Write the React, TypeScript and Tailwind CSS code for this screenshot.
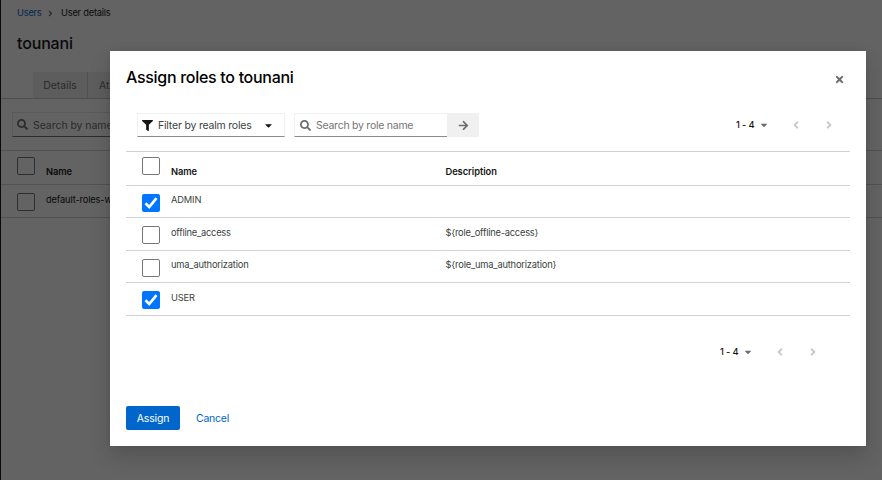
import React from 'react';
import { FaAngleLeft, FaAngleRight, FaArrowRight, FaCaretDown, FaFilter, FaSearch, FaTimes } from 'react-icons/fa';

function Box({ checked, className = '' }: { checked?: boolean; className?: string }) {
  return (
    <span
      role="checkbox"
      aria-checked={!!checked}
      className={`block size-[18px] shrink-0 rounded-[2px] ${checked ? 'bg-[#0075ff]' : 'border border-[#767676] bg-white'} ${className}`}
    >
      {checked && (
        <svg viewBox="0 0 18 18" className="size-[18px]" fill="none" stroke="white" strokeWidth="2.7">
          <path d="M3.5 9.3 7.2 13 14.5 4.2" />
        </svg>
      )}
    </span>
  );
}

function Pager({ className }: { className: string }) {
  return (
    <div className={`flex items-center ${className}`}>
      <span className="w-[23px] whitespace-nowrap text-[9.3px] font-medium text-[#151515] tracking-[-0.15px]">1 - 4</span>
      <FaCaretDown className="size-[10px] text-[#6a6e73]" />
      <FaAngleLeft className="ml-[21px] size-[12px] text-[#c8c8c8]" />
      <FaAngleRight className="ml-[21px] size-[12px] text-[#c8c8c8]" />
    </div>
  );
}

const roles = [
  { name: 'ADMIN', description: '', checked: true, row: 'h-[32px]', track: 'mt-[-2px] tracking-[-0.15px]' },
  { name: 'offline_access', description: '${role_offline-access}', checked: false, row: 'h-[33px]', track: 'mt-[-1px] tracking-[-0.22px]' },
  { name: 'uma_authorization', description: '${role_uma_authorization}', checked: false, row: 'h-[32px]', track: 'mt-[-2px] tracking-[-0.18px]' },
  { name: 'USER', description: '', checked: true, row: 'h-[33px]', track: 'mt-[-1px] tracking-[-0.15px]' },
];

function UserPage() {
  return (
    <div className="h-[480px] border-l border-[#151515] bg-white text-[#151515]">
      <div className="flex h-[26px] items-center pl-4 text-[9.3px] tracking-[-0.22px]">
        <span className="w-[29px] text-[#0066cc]">Users</span>
        <FaAngleRight className="mr-[6px] size-[9px] text-[#6a6e73]" />
        <span>User details</span>
      </div>
      <h1 className="h-[46px] pl-4 pt-[6px] text-[16px] font-[450] leading-[22px] tracking-[-0.15px]">tounani</h1>
      <div className="flex h-[27px] border-b border-[#c5c5c5] pl-8 text-[10.5px] text-[#6a6e73]">
        <div className="flex w-[55px] items-center justify-center border-r border-[#d2d2d2] bg-[#f0f0f0] pt-[2px]">Details</div>
        <div className="flex w-[22px] items-center bg-[#f0f0f0] pl-[11px] pt-[2px]">At</div>
      </div>
      <div className="h-[51px] pl-[11px] pt-[13px]">
        <div className="flex h-[25px] w-[160px] items-center border border-b-[#6a6e73] border-[#e8e8e8] pl-1 text-[10.5px] text-[#6a6e73]">
          <FaSearch className="mr-[5px] size-[11px]" />
          <span className="pt-[2px] tracking-[-0.05px]">Search by name</span>
        </div>
      </div>
      <div className="flex h-[35px] border-y border-[#d2d2d2] pl-4 pt-[6px]">
        <Box />
        <b className="ml-[11px] mt-[7px] text-[9.3px] font-semibold leading-[16px] tracking-[-0.1px]">Name</b>
      </div>
      <div className="flex h-[33px] border-b border-[#d2d2d2] pl-4 pt-[8px]">
        <Box />
        <span className="ml-[11px] mt-[-1px] whitespace-nowrap text-[9.3px] leading-[16px] tracking-[-0.14px]">default-roles-w</span>
      </div>
    </div>
  );
}

export default function App() {
  return (
    <div className="relative h-[480px] w-[882px] overflow-hidden font-['Inter','Liberation_Sans',sans-serif]">
      <UserPage />
      <div className="absolute inset-0 bg-[#030303]/62 pl-[110px] pt-[51px]">
        <section role="dialog" className="flex h-[395px] w-[756px] flex-col bg-white px-4 text-[#151515] shadow-[0_10px_20px_rgba(3,3,3,0.16),0_0_6px_rgba(3,3,3,0.08)]">
          <header className="flex h-[62px] items-start justify-between pt-[15px]">
            <h2 className="text-[16px] font-[450] leading-[22px] tracking-[-0.3px] text-black">Assign roles to tounani</h2>
            <FaTimes className="mr-[5px] mt-[8px] size-[11px] text-[#6a6e73]" />
          </header>
          <div className="flex h-[38px] items-start pl-[11px] text-[10.5px]">
            <div className="flex h-[24px] w-[148px] items-center border border-[#f0f0f0] border-b-[#8a8d90] pl-[4px] text-[#3c3f42]">
              <FaFilter className="mr-[5px] size-[11px] text-[#151515]" />
              <span className="w-[105px] whitespace-nowrap pt-[2px] tracking-[-0.2px]">Filter by realm roles</span>
              <FaCaretDown className="size-[11px] text-[#151515]" />
            </div>
            <div className="ml-[9px] flex h-[24px] w-[153px] items-center border border-r-0 border-[#f0f0f0] border-b-[#8a8d90] pl-[5px] text-[#757575]">
              <FaSearch className="mr-[5px] size-[11px] text-[#6a6e73]" />
              <span className="pt-[2px] tracking-[-0.25px]">Search by role name</span>
            </div>
            <div className="flex h-[24px] w-8 items-center justify-center bg-[#f0f0f0]">
              <FaArrowRight className="size-[11px] text-[#6a6e73]" />
            </div>
            <Pager className="ml-auto mr-[15px] h-[24px]" />
          </div>
          <div className="flex h-[35px] shrink-0 border-y border-[#d2d2d2] pl-4 pt-[5px] text-[9.3px] font-semibold tracking-[-0.05px]">
            <Box />
            <span className="ml-[11px] mt-[7px] w-[274.5px] leading-[16px]">Name</span>
            <span className="mt-[7px] leading-[16px]">Description</span>
          </div>
          {roles.map((role) => (
            <div key={role.name} className={`flex shrink-0 border-b border-[#d2d2d2] pl-4 pt-[8px] text-[9.3px] text-[#3c3f42] ${role.row}`}>
              <Box checked={role.checked} />
              <span className={`ml-[11px] w-[274.5px] leading-[16px] ${role.track}`}>{role.name}</span>
              <span className={`leading-[16px] ${role.track}`}>{role.description}</span>
            </div>
          ))}
          <Pager className="ml-auto mr-[31px] mt-[24px] h-[24px]" />
          <footer className="mt-[42px] flex h-[24px] items-center text-[10.5px]">
            <button className="h-[24px] w-[54px] rounded-[2px] bg-[#0066cc] pt-[2px] tracking-[-0.15px] text-white">Assign</button>
            <button className="ml-4 pt-[2px] tracking-[-0.25px] text-[#0066cc]">Cancel</button>
          </footer>
        </section>
      </div>
    </div>
  );
}
